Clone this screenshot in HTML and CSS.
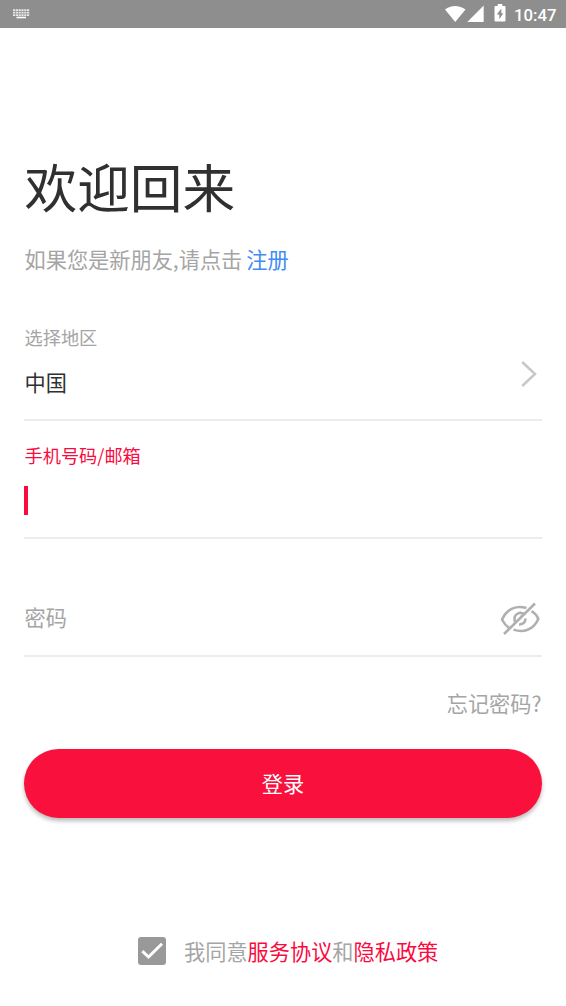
FILE: index.html
```html
<!DOCTYPE html>
<html lang="zh-CN">
<head>
<meta charset="utf-8">
<title>登录</title>
<link rel="stylesheet" href="styles.css">
</head>
<body>
<header class="status">
  <svg class="keyboard" width="17" height="10" viewBox="0 0 17 10">
    <path d="M0 1.200h16.500M0 3.700h16.500M0 6.200h16.500" stroke="#e8e8e8" stroke-width="1.800" stroke-dasharray="2.200 .6"/>
    <path d="M3.500 8.500h9.500" stroke="#fff" stroke-width="1.600"/>
  </svg>
  <div class="indicators">
    <svg width="54" height="20" viewBox="0 0 54 20" fill="#fff">
      <path d="M0 5.500C5.800.7 14.200.7 20.500 5.500L10.200 18Z"/>
      <path d="M38.700 1.500v16.500H22.300Z" />
    </svg>
    <svg class="battery" width="12" height="18" viewBox="0 0 12 18">
      <path fill="#fff" d="M3.700 0h4.600v2h2.200q1 0 1 1v13.500q0 1-1 1h-9q-1 0-1-1V3q0-1 1-1h2.200Z"/>
      <path fill="#8e8e8e" d="M7.300 4.500 2.800 10.500h2.500v4.800l4-6H7.300Z"/>
    </svg>
    <span class="clock">10:47</span>
  </div>
</header>
<main class="page">
  <h1 class="title">欢迎回来</h1>
  <p class="hint"><span>如果您是新朋友,请点击</span><a class="register">注册</a></p>
  <section class="field region">
    <div>
      <div class="label">选择地区</div>
      <div class="value">中国</div>
    </div>
    <svg class="chevron" width="16" height="26" viewBox="0 0 16 26" fill="none" stroke="#c8c8c8" stroke-width="2.500"><path d="M1.200 1 14 13 1.200 25"/></svg>
  </section>
  <section class="field account">
    <div class="label active">手机号码/邮箱</div>
    <div class="caret"></div>
  </section>
  <section class="field password">
    <div class="placeholder">密码</div>
    <svg class="eye" width="40" height="34" viewBox="0 0 40 34" fill="none" stroke="#b0b0b0" stroke-width="2.600">
      <path d="M26.500 6C16 3 7 7 2 17.500c2 4 4 6.300 7 8.400M31.500 9.200c3.500 2 5.500 4.300 6.800 7.800C33.500 28 23 31 13.500 27.600"/>
      <path d="M24.500 12.500c-4-3.500-10-1-10 4.500q0 1.500.6 2.800M25.500 16.500c0 4-3 6.200-6.500 6"/>
      <path d="M21.500 15.500q-.5-1-1.500-1" stroke-width="2"/>
      <path d="M35 1.500 4 32"/>
    </svg>
  </section>
  <a class="forgot">忘记密码?</a>
  <button class="login"><span class="login-text">登录</span></button>
  <div class="agreement">
    <svg width="28" height="28" viewBox="0 0 28 28"><rect width="28" height="28" rx="3" fill="#999"/><path d="M4.300 14.200 10.500 20 24 6.800" fill="none" stroke="#fff" stroke-width="3"/></svg>
    <span class="terms">我同意<a class="link">服务协议</a>和<a class="link">隐私政策</a></span>
  </div>
</main>
</body>
</html>
```
FILE: styles.css
```css
* { box-sizing: border-box; }
body {
  margin: 0;
  height: 1006px;
  background: #fff;
  color: #a5a5a5;
  font: 21.2px/30px "Noto Sans CJK SC", sans-serif;
}
.status {
  display: flex;
  justify-content: space-between;
  height: 28px;
  padding: 0 10px 0 13px;
  background: #8e8e8e;
}
.keyboard { margin-top: 9px; }
.indicators { display: flex; }
.indicators svg { margin-top: 4px; }
.indicators .battery { margin-left: -5px; }
.clock {
  width: 42px;
  margin-left: 8px;
  color: #fff;
  font: 500 16.8px/30px Roboto, sans-serif;
  text-align: right;
  white-space: nowrap;
}
.page {
  display: flex;
  flex-direction: column;
  padding: 127px 24px 0;
}
.title {
  margin: 0;
  padding-left: .5px;
  color: #303030;
  font-size: 52.7px;
  font-weight: 400;
  line-height: 60px;
}
.hint { display: flex; gap: 4px; margin: 29px 0 0; padding-left: .5px; }
.register { color: #418cf5; }
.field { border-bottom: 2px solid #ececec; }
.region {
  display: flex;
  justify-content: space-between;
  height: 98px;
  margin-top: 49px;
}
.label { padding-left: .5px; font-size: 18.2px; line-height: 28px; }
.value { margin-top: 16px; padding-left: .5px; color: #303030; }
.chevron { margin: 38px 5px 0 0; }
.account { height: 98px; margin-top: 20px; }
.active { color: #fa0a3e; }
.caret { width: 4px; height: 29px; margin-top: 17px; background: #fa0a3e; }
.password {
  display: flex;
  justify-content: space-between;
  height: 98px;
  margin-top: 20px;
  padding-top: 43px;
}
.placeholder { padding-left: .5px; }
.eye { margin-right: 2px; }
.forgot { align-self: flex-end; margin-top: 31px; padding-right: .5px; }
.login {
  height: 69px;
  margin: 31px 0 0;
  padding: 0;
  border: 0;
  border-radius: 35px;
  background: #f9103d;
  box-shadow: 0 3px 4px rgba(0, 0, 0, .27);
  color: #fff;
  font: inherit;
}
.login-text { display: block; padding-bottom: 2px; }
.agreement {
  display: flex;
  align-items: center;
  gap: 18.5px;
  height: 30px;
  margin: 118px 0 0 113.5px;
}
.terms { white-space: nowrap; }
.link { color: #fa0a3e; }
```
